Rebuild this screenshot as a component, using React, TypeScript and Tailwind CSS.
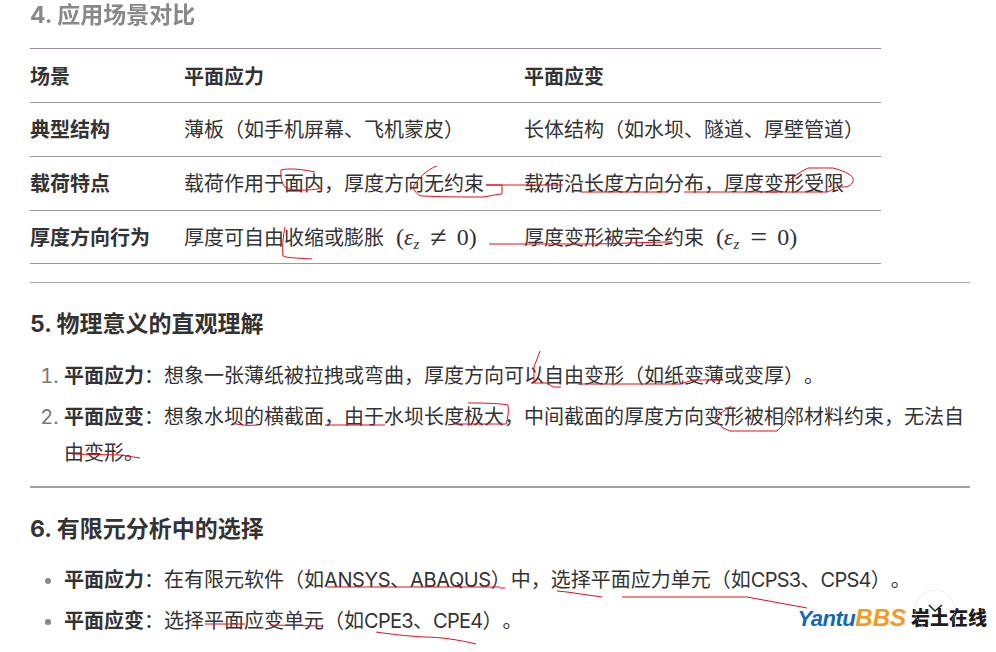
const FONT = "font-['Inter','Noto_Sans_CJK_SC',sans-serif] [text-spacing-trim:space-all]";

const rows = [
  { label: "典型结构", stress: "薄板（如手机屏幕、飞机蒙皮）", strain: "长体结构（如水坝、隧道、厚壁管道）" },
  { label: "载荷特点", stress: "载荷作用于面内，厚度方向无约束", strain: "载荷沿长度方向分布，厚度变形受限" },
];

function Strain({ op }: { op: string }) {
  return (
    <span className="ml-3 font-['Liberation_Serif',serif] text-[24px] leading-[20px]">
      (<i>ε</i>
      <sub className="text-[15px] italic">z</sub>
      <span className="ml-[11px] mr-[10px] align-[-2px] text-[30px] leading-[20px]">{op}</span>0)
    </span>
  );
}

function Latin({ children }: { children: string }) {
  return <span className="tracking-[-0.7px]">{children}</span>;
}

function LatinWide({ children }: { children: string }) {
  return <span className="tracking-[-0.4px]">{children}</span>;
}

function Scribbles() {
  const lines = [
    "M281 170c8-2 20-1 34 2M281 170c-1 10 2 18 8 19 12 2 26 1 33-1",
    "M437 166c-10 3-20 14-24 21 2 6 6 9 10 9 16 1 44 1 60 1 8-1 14-3 19-3v-9H486",
    "M486 185h77M582 192h86M684 192h93M785 183c8-5 14-11 23-15h25c8 2 18 6 20 10 1 5-2 8-8 9l-8 0c-4 1-6 5-12 5h-56",
    "M285 227c-2 10-3 22-2 29 4 2 14 2 29 3",
    "M489 244h100c20 0 60-2 83-2",
    "M72 454l48 1 20 3",
    "M232 423c8 2 16 3 25 2M325 425h18M343 425h42M453 424h42c3 0 10 0 11 0 2-6 3-14 2-19-10-2-30-2-40-2",
    "M540 351l-6 16v16h13l6 4h8M578 384h102l13-4h30",
    "M731 406l-16 11c2 5 5 9 8 11l7 3h47l8-8 1-10",
    "M327 587h173M500 588h5",
    "M205 624h40M270 625l52 1",
    "M557 591l10 1 35 5M622 597h125l60 11",
    "M376 632c14 2 30 4 48 5 16 0 36 3 52 7",
  ];
  return (
    <svg className="absolute inset-0 pointer-events-none" width="996" height="652" fill="none" stroke="#e0101c" strokeWidth="1">
      {lines.map((d) => (
        <path key={d} d={d} />
      ))}
    </svg>
  );
}

function Logo() {
  return (
    <div className="absolute right-[9px] top-[602px] flex items-center">
      <span className="font-['Liberation_Sans',sans-serif] text-[22px] font-bold italic leading-[32px] tracking-[-0.5px] text-[#1168b4]">
        Yantu<span className="text-[24px] tracking-[0px] text-[#f39a24]">BBS</span>
      </span>
      <span className="relative ml-[5px] text-[19px] font-black leading-[32px] text-[#1d1d1d]">
        岩土在线
        <svg className="absolute -top-[13px] left-[1px]" width="48" height="48" fill="none" viewBox="0 0 48 48">
          <circle cx="23" cy="20" r="20" stroke="#d8d8d8" strokeDasharray="1 1" />
          <path d="M17 15l6 6 7-6" stroke="#222" strokeWidth="1.5" />
        </svg>
      </span>
    </div>
  );
}

export default function App() {
  return (
    <div className={`relative h-[652px] w-[996px] overflow-hidden bg-white text-[#333] ${FONT}`}>
      <div className="pl-[30px] pr-[26px]">
        <h2 className="h-[48px] text-[23px] font-bold leading-[30px] text-[#888] blur-[0.6px]">4. 应用场景对比</h2>
        <div className="w-[851px] border-t border-[#9b8e9b] text-[20px]">
          <div className="grid h-[54px] grid-cols-[154px_340px_1fr] items-center border-b border-[#999] pt-[2px] font-bold">
            <span>场景</span>
            <span>平面应力</span>
            <span>平面应变</span>
          </div>
          {rows.map((row) => (
            <div key={row.label} className="grid h-[54px] grid-cols-[154px_340px_1fr] items-center border-b border-[#999]">
              <span className="font-bold">{row.label}</span>
              <span>{row.stress}</span>
              <span>{row.strain}</span>
            </div>
          ))}
          <div className="grid h-[53px] grid-cols-[154px_340px_1fr] items-center border-b border-[#999] pt-[2px]">
            <span className="font-bold">厚度方向行为</span>
            <span>
              厚度可自由收缩或膨胀
              <Strain op="≠" />
            </span>
            <span>
              厚度变形被完全约束
              <Strain op="=" />
            </span>
          </div>
        </div>

        <div className="mt-[18px] h-px bg-[#aaa]" />
        <h2 className="mt-[26px] text-[23px] font-bold leading-[30px]">5. 物理意义的直观理解</h2>
        <ol className="mt-[19px] list-decimal pl-[34px] text-[20px] leading-[36px] marker:text-[#777]">
          <li>
            <b>平面应力</b>：想象一张薄纸被拉拽或弯曲，厚度方向可以自由变形（如纸变薄或变厚）。
          </li>
          <li className="mt-[5px]">
            <b>平面应变</b>：想象水坝的横截面，由于水坝长度极大，中间截面的厚度方向变形被相邻材料约束，无法自由变形。
          </li>
        </ol>

        <div className="mt-[15px] h-[2px] bg-[#a0a0a0]" />
        <h2 className="mt-[26px] text-[23px] font-bold leading-[30px]">6. 有限元分析中的选择</h2>
        <ul className="mt-[18px] list-disc pl-[34px] text-[20px] leading-[36px] marker:text-[#888]">
          <li>
            <b>平面应力</b>：在有限元软件（如<LatinWide>ANSYS</LatinWide>、<LatinWide>ABAQUS</LatinWide>）中，选择平面应力单元（如<Latin>CPS3</Latin>、<Latin>CPS4</Latin>）。
          </li>
          <li className="mt-[5px]">
            <b>平面应变</b>：选择平面应变单元（如<Latin>CPE3</Latin>、<Latin>CPE4</Latin>）。
          </li>
          <li className="mt-[7px]">
            <b>对比说明</b>：CPS3 单元用于平面应力，CPE3 单元用于平面应变。
          </li>
        </ul>
      </div>
      <Scribbles />
      <Logo />
    </div>
  );
}
